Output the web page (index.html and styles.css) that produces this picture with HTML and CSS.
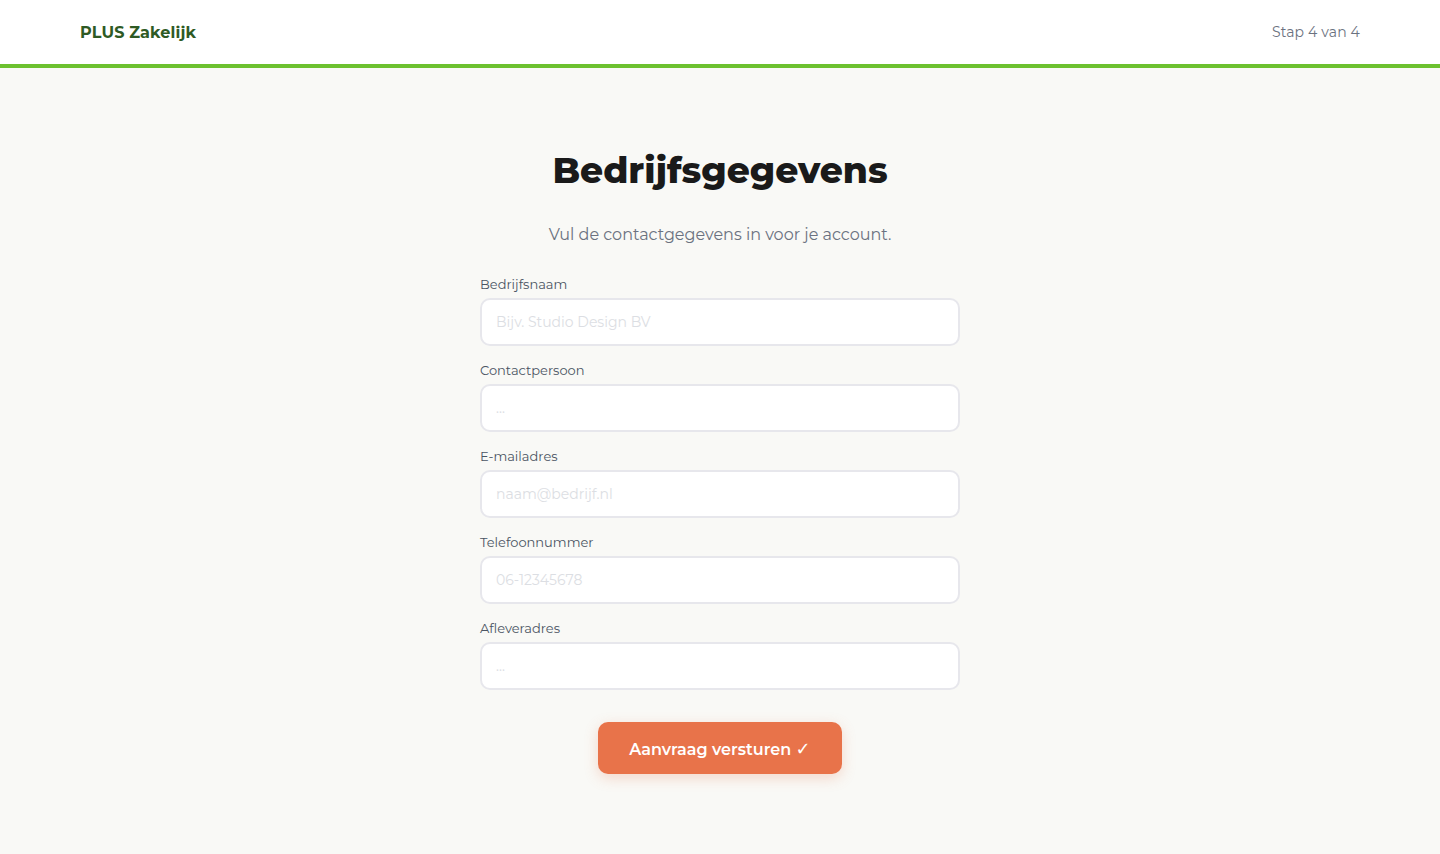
FILE: index.html
```html
<!DOCTYPE html>
<html lang="nl">
<head>
<meta charset="utf-8">
<title>PLUS Zakelijk – Bedrijfsgegevens</title>
<link rel="stylesheet" href="styles.css">
</head>
<body>
<header class="topbar">
  <div class="brand">PLUS Zakelijk</div>
  <div class="step">Stap 4 van 4</div>
</header>
<main class="content">
  <h1 class="title">Bedrijfsgegevens</h1>
  <p class="subtitle">Vul de contactgegevens in voor je account.</p>
  <form class="form">
    <label class="field">
      <span class="label">Bedrijfsnaam</span>
      <input class="input" type="text" placeholder="Bijv. Studio Design BV">
    </label>
    <label class="field">
      <span class="label">Contactpersoon</span>
      <input class="input" type="text" placeholder="...">
    </label>
    <label class="field">
      <span class="label">E-mailadres</span>
      <input class="input" type="email" placeholder="naam@bedrijf.nl">
    </label>
    <label class="field">
      <span class="label">Telefoonnummer</span>
      <input class="input" type="tel" placeholder="06-12345678">
    </label>
    <label class="field">
      <span class="label">Afleveradres</span>
      <input class="input" type="text" placeholder="...">
    </label>
    <div class="actions">
      <button class="submit" type="button">Aanvraag versturen <span class="check">✓</span></button>
    </div>
  </form>
</main>
</body>
</html>
```
FILE: styles.css
```css
* { box-sizing: border-box; }
html, body { margin: 0; padding: 0; }
body {
  font-family: Montserrat, "DejaVu Sans", "Noto Sans", sans-serif;
  background: #f9f9f6;
  color: #1a1a1a;
  min-height: 854px;
}
.topbar {
  height: 68px;
  background: #ffffff;
  border-bottom: 4px solid #6cc12f;
  display: flex;
  align-items: center;
  justify-content: space-between;
  padding: 0 80px;
}
.brand {
  font-weight: 700;
  font-size: 16px;
  color: #2e5a24;
  letter-spacing: 0.15px;
}
.step {
  font-size: 14px;
  color: #6b7280;
  letter-spacing: 0.15px;
}
.content {
  display: flex;
  flex-direction: column;
  align-items: center;
  padding-top: 80px;
}
.title {
  margin: 0;
  font-size: 36px;
  font-weight: 800;
  line-height: 44px;
  color: #1a1a1a;
}
.subtitle {
  margin: 31px 0 0;
  font-size: 16px;
  line-height: 24px;
  color: #6b7280;
}
.form {
  width: 480px;
  margin-top: 28px;
  display: flex;
  flex-direction: column;
  gap: 15px;
}
.field {
  display: flex;
  flex-direction: column;
  gap: 5px;
}
.label {
  font-size: 13px;
  line-height: 18px;
  color: #4b5563;
}
.input {
  height: 48px;
  border: 2px solid #e7e7ec;
  border-radius: 10px;
  background: #ffffff;
  padding: 0 14px;
  font-family: inherit;
  font-size: 14px;
  color: #1a1a1a;
  outline: none;
}
.input::placeholder { color: #dcdee3; }
.actions {
  display: flex;
  justify-content: center;
  margin-top: 17px;
}
.submit {
  width: 244px;
  height: 52px;
  border: none;
  border-radius: 10px;
  background: #e8734a;
  color: #ffffff;
  font-family: inherit;
  font-size: 16px;
  font-weight: 600;
  box-shadow: 0 4px 14px rgba(232, 115, 74, 0.25);
  cursor: pointer;
}
.check {
  font-family: "DejaVu Sans", sans-serif;
  font-size: 18px;
  font-weight: 400;
}
```
